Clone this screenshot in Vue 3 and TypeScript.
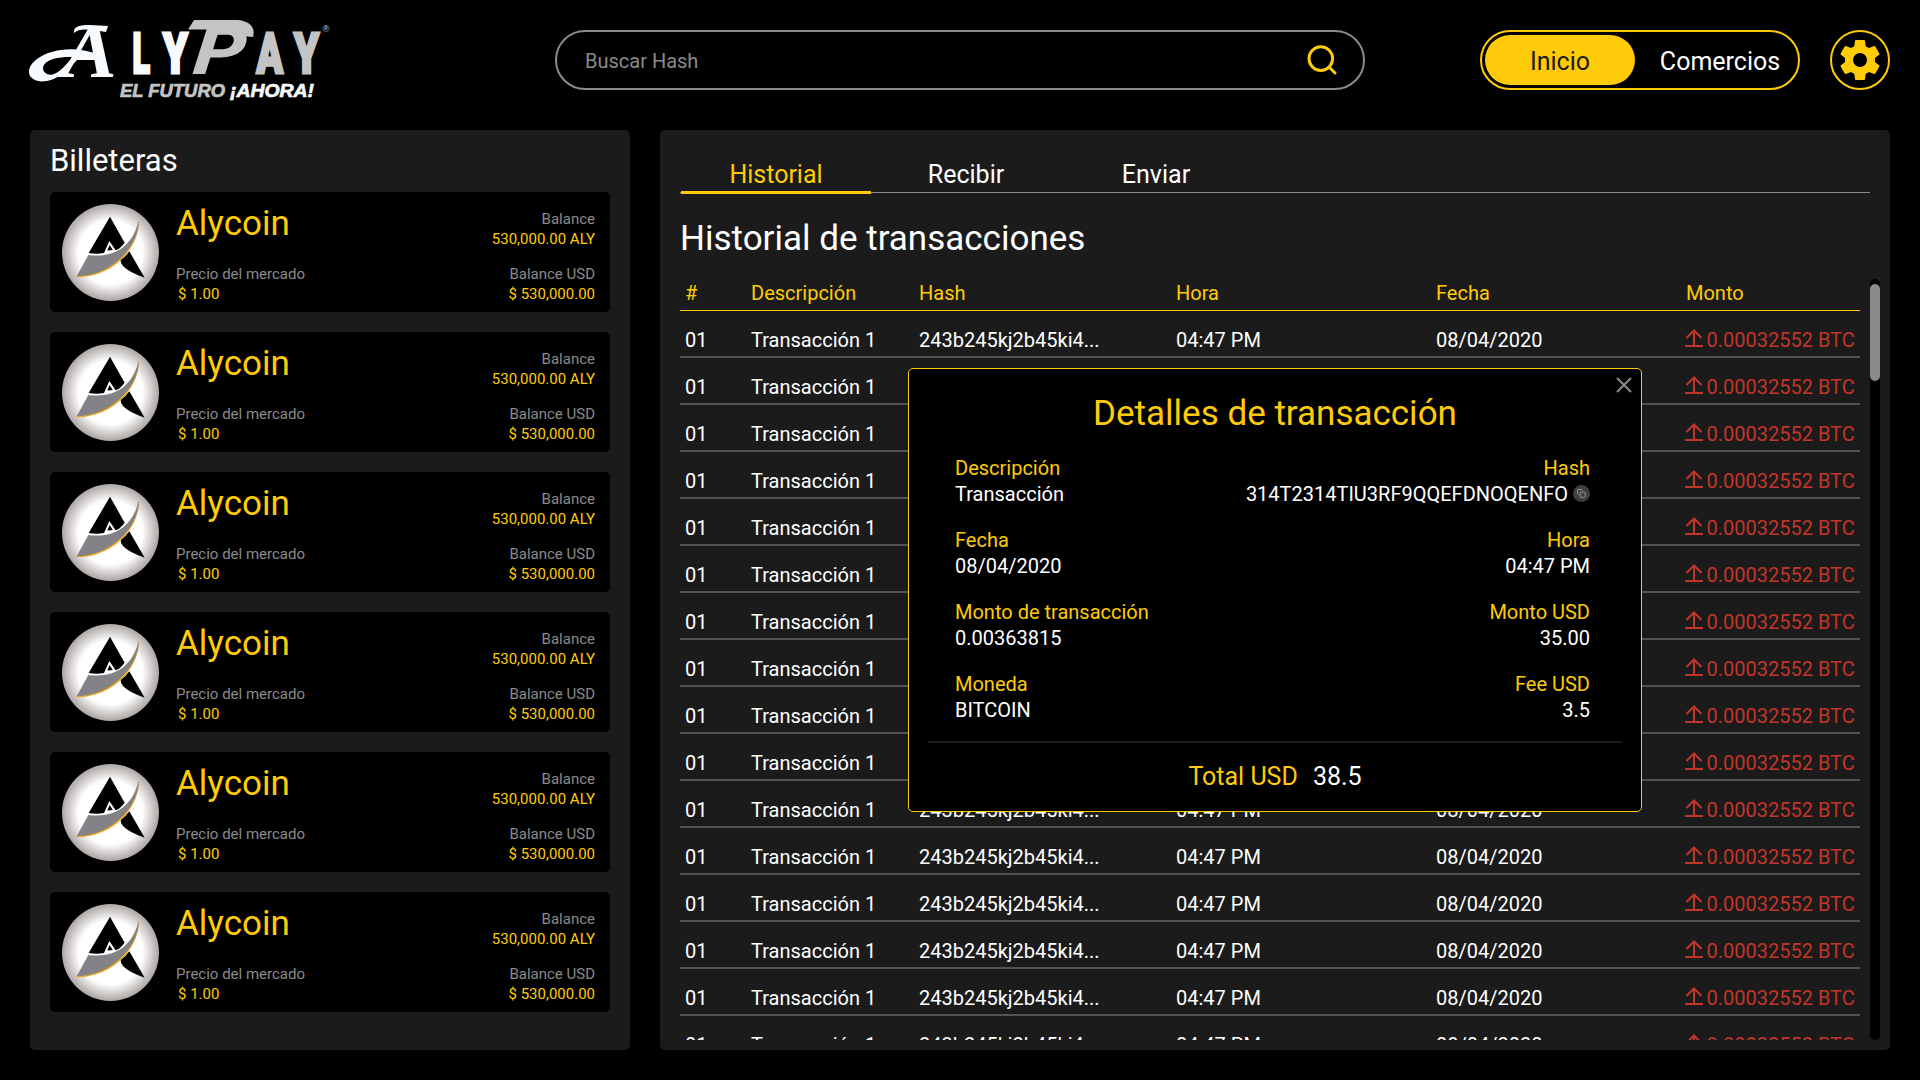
<script setup lang="ts">
interface Wallet {
  name: string
  price: string
  balance: string
  balanceUsd: string
}
interface Transaction {
  id: string
  description: string
  hash: string
  time: string
  date: string
  amount: string
}
interface Detail {
  label: string
  value: string
  copy?: boolean
}

const wallets: Wallet[] = Array.from({ length: 6 }, () => ({
  name: 'Alycoin',
  price: '$ 1.00',
  balance: '530,000.00 ALY',
  balanceUsd: '$ 530,000.00',
}))

const tabs: string[] = ['Historial', 'Recibir', 'Enviar']
const columns: string[] = ['#', 'Descripción', 'Hash', 'Hora', 'Fecha', 'Monto']

const transactions: Transaction[] = Array.from({ length: 16 }, () => ({
  id: '01',
  description: 'Transacción 1',
  hash: '243b245kj2b45ki4...',
  time: '04:47 PM',
  date: '08/04/2020',
  amount: '0.00032552 BTC',
}))

const details: [Detail, Detail][] = [
  [{ label: 'Descripción', value: 'Transacción' }, { label: 'Hash', value: '314T2314TIU3RF9QQEFDNOQENFO', copy: true }],
  [{ label: 'Fecha', value: '08/04/2020' }, { label: 'Hora', value: '04:47 PM' }],
  [{ label: 'Monto de transacción', value: '0.00363815' }, { label: 'Monto USD', value: '35.00' }],
  [{ label: 'Moneda', value: 'BITCOIN' }, { label: 'Fee USD', value: '3.5' }],
]
</script>

<template>
  <div class="page">
    <header class="header">
      <svg class="logo" width="320" height="100" viewBox="0 0 320 100">
        <g class="logo-white">
          <text class="script" transform="translate(42 66.500) scale(1.08 1)" font-size="76">A</text>
          <path d="M54 23C53 16 60 15 70 15L88 16L86 22C68 19 59 18 54 23Z" />
          <path d="M80 45C56 35 30 39 17 49C3 60 9 71 22 71.500C36 71.500 46 62 57 50L51 49C42 60 34 67 27 64C20 61 22 52 33 49C48 45 64 48 80 50Z" />
          <text class="block" transform="translate(112.500 63) scale(.58 1)" font-size="55.500">L</text>
          <text class="block" transform="translate(143 63) scale(.71 1)" font-size="55.500">Y</text>
        </g>
        <g class="logo-grey">
          <path d="M174 10H215C230 10 236 18 233 27L221 26C222 21 218 19.500 211 19.500H168Z" />
          <text class="slant" transform="translate(172 64) skewX(-6) scale(1.22 1)" font-size="67">P</text>
          <text class="block" transform="translate(236.500 63) scale(.7 1)" font-size="55.500">A</text>
          <text class="block" transform="translate(274 63) scale(.72 1)" font-size="55.500">Y</text>
          <text x="302.500" y="21.500" class="mark">®</text>
        </g>
        <text class="tagline grey" x="100" y="87" textLength="105" lengthAdjust="spacingAndGlyphs">EL FUTURO</text>
        <text class="tagline white" x="210" y="87" textLength="84" lengthAdjust="spacingAndGlyphs">¡AHORA!</text>
      </svg>

      <div class="search">
        <span>Buscar Hash</span>
        <svg width="32" height="32" viewBox="0 0 32 32">
          <circle cx="14.800" cy="14.600" r="11.800" />
          <path d="M23 23L29 29" />
        </svg>
      </div>

      <nav class="switch">
        <span class="option selected">Inicio</span>
        <span class="option">Comercios</span>
      </nav>

      <div class="settings">
        <svg width="48" height="48" viewBox="0 0 24 24">
          <path d="M12 15.500A3.500 3.500 0 0 1 8.500 12 3.500 3.500 0 0 1 12 8.500a3.500 3.500 0 0 1 3.500 3.500 3.500 3.500 0 0 1-3.500 3.500m7.430-2.530c.04-.32.07-.64.07-.97 0-.33-.03-.66-.07-1l2.110-1.630c.19-.15.24-.42.12-.64l-2-3.460c-.12-.22-.39-.31-.61-.22l-2.490 1c-.52-.39-1.060-.73-1.690-.98l-.37-2.650A.506.506 0 0 0 14 2h-4c-.25 0-.46.18-.5.42l-.37 2.650c-.63.25-1.170.59-1.690.98l-2.490-1c-.22-.09-.49 0-.61.22l-2 3.460c-.13.22-.07.49.12.64L4.570 11c-.04.34-.07.67-.07 1 0 .33.03.65.07.97l-2.110 1.660c-.19.15-.25.42-.12.64l2 3.460c.12.22.39.3.61.22l2.490-1.010c.52.4 1.060.74 1.690.99l.37 2.650c.04.24.25.42.5.42h4c.25 0 .46-.18.5-.42l.37-2.650c.63-.26 1.170-.59 1.690-.99l2.490 1.010c.22.08.49 0 .61-.22l2-3.460c.12-.22.07-.49-.12-.64l-2.110-1.660Z" />
        </svg>
      </div>
    </header>

    <main class="content">
      <section class="panel wallets">
        <h2>Billeteras</h2>
        <article v-for="(w, i) in wallets" :key="i" class="wallet">
          <svg class="coin" width="97" height="97" viewBox="36 42 291 291">
            <defs>
              <radialGradient :id="`coin-${i}`">
                <stop offset="0" stop-color="#fff" />
                <stop offset=".66" stop-color="#fff" />
                <stop offset="1" stop-color="#aca6a4" />
              </radialGradient>
            </defs>
            <circle cx="181.500" cy="187.500" r="145.500" :fill="`url(#coin-${i})`" />
            <path d="M180 80L116 189Q140 193 162 189L178 153L197 181Q212 175 224 158Z" />
            <path d="M179 165L172 181Q180 182 188 179Z" />
            <path d="M238 184L284 263Q235 246 219 228Q211 219 212 210Q228 198 238 184Z" />
            <path d="M267 91C270 165 197 263 78 262L82 256C190 250 258 160 267 91Z" fill="#f0a920" />
            <path d="M267 91C267 165 190 257 80 259L115 195C190 204 245 175 267 91Z" fill="#838387" />
          </svg>
          <div class="wallet-info">
            <h3>{{ w.name }}</h3>
            <span class="caption">Precio del mercado</span>
            <span class="amount price">{{ w.price }}</span>
          </div>
          <div class="wallet-balance">
            <span class="caption">Balance</span>
            <span class="amount">{{ w.balance }}</span>
            <span class="caption usd">Balance USD</span>
            <span class="amount">{{ w.balanceUsd }}</span>
          </div>
        </article>
      </section>

      <section class="panel history">
        <div class="tabs">
          <span v-for="(t, i) in tabs" :key="t" class="tab" :class="{ active: i === 0 }">{{ t }}</span>
        </div>
        <h1>Historial de transacciones</h1>
        <div class="table-area">
          <div class="table">
            <div class="row head">
              <span v-for="c in columns" :key="c">{{ c }}</span>
            </div>
            <div v-for="(t, i) in transactions" :key="i" class="row">
              <span>{{ t.id }}</span>
              <span>{{ t.description }}</span>
              <span>{{ t.hash }}</span>
              <span>{{ t.time }}</span>
              <span>{{ t.date }}</span>
              <span class="outgoing">
                <svg width="18" height="18" viewBox="0 0 18 18">
                  <path d="M9 16V1.500M1.500 9L9 1.500L16.500 9M0 17H18" />
                </svg>
                {{ t.amount }}
              </span>
            </div>
          </div>
          <div class="scrollbar"><div class="thumb"></div></div>
        </div>
      </section>
    </main>

    <div class="modal">
      <svg class="close" width="16" height="16" viewBox="0 0 16 16">
        <path d="M1 1L15 15M15 1L1 15" />
      </svg>
      <h2>Detalles de transacción</h2>
      <div class="details">
        <div v-for="(pair, i) in details" :key="i" class="pair">
          <div v-for="d in pair" :key="d.label" class="detail">
            <span class="label">{{ d.label }}</span>
            <span class="value">
              {{ d.value }}
              <svg v-if="d.copy" width="17" height="17" viewBox="0 0 17 17">
                <circle cx="8.500" cy="8.500" r="8.500" fill="#3c4043" stroke="none" />
                <g stroke="#a2a4a6" stroke-width=".9">
                  <rect x="7.200" y="7" width="5" height="5.400" rx="1" />
                  <path d="M5.600 9.300H5.300Q4.600 9.300 4.600 8.600V5.300Q4.600 4.500 5.400 4.500H8.600Q9.400 4.500 9.400 5.200" />
                </g>
              </svg>
            </span>
          </div>
        </div>
      </div>
      <div class="total">
        <span class="label">Total USD</span>
        <span>38.5</span>
      </div>
    </div>
  </div>
</template>

<style>
body {
  margin: 0;
  background: #000;
}
</style>

<style scoped>
.page {
  position: relative;
  box-sizing: border-box;
  width: 1920px;
  height: 1080px;
  padding: 0 30px 30px;
  overflow: hidden;
  display: flex;
  flex-direction: column;
  background: #000;
  color: #fff;
  font-family: Roboto, "Liberation Sans", sans-serif;
}
h1, h2, h3 {
  margin: 0;
  font-weight: 400;
}
.header {
  flex: none;
  height: 130px;
  display: flex;
  align-items: flex-start;
}
.logo {
  flex: none;
  margin: 10px 215px 0 -10px;
}
.logo-white {
  fill: #f8fbfd;
  stroke: #f8fbfd;
  stroke-width: 0;
}
.logo-grey {
  fill: #c4c4c4;
  stroke: #c4c4c4;
  stroke-width: 0;
}
.script {
  font-family: "Liberation Serif", serif;
  font-weight: 700;
  font-style: italic;
}
.block {
  font-family: Roboto, sans-serif;
  font-weight: 900;
  stroke-width: 3;
}
.slant {
  font-family: Roboto, sans-serif;
  font-weight: 800;
  font-style: italic;
}
.mark {
  font-family: "Liberation Sans", sans-serif;
  font-size: 9.500px;
}
.tagline {
  font-family: "Liberation Sans", sans-serif;
  font-size: 18.500px;
  font-weight: 700;
  font-style: italic;
  stroke-width: .7;
}
.grey {
  fill: #c4c4c4;
  stroke: #c4c4c4;
}
.white {
  fill: #f8fbfd;
  stroke: #f8fbfd;
}
.search {
  box-sizing: border-box;
  width: 810px;
  height: 60px;
  margin-top: 30px;
  padding: 0 25px 0 28px;
  border: 2px solid #8a8a8a;
  border-radius: 30px;
  display: flex;
  align-items: center;
  justify-content: space-between;
  color: #8a8a8a;
  font-size: 20px;
}
.search span { padding-top: 2px; }
.search svg {
  fill: none;
  stroke: #ffcb08;
  stroke-width: 3;
  stroke-linecap: round;
}
.switch {
  box-sizing: border-box;
  width: 320px;
  height: 60px;
  margin: 30px 30px 0 115px;
  padding: 3px;
  border: 2px solid #ffcb08;
  border-radius: 30px;
  display: flex;
  font-size: 25px;
}
.option {
  box-sizing: border-box;
  flex: 1;
  display: flex;
  align-items: center;
  justify-content: center;
  padding: 2px 0 0 10px;
}
.selected {
  flex: none;
  width: 150px;
  padding: 2px 0 0;
  border-radius: 25px;
  background: #ffcb08;
  color: #1b1b1b;
}
.settings {
  box-sizing: border-box;
  width: 60px;
  height: 60px;
  margin-top: 30px;
  border: 2px solid #ffcb08;
  border-radius: 50%;
  display: flex;
  align-items: center;
  justify-content: center;
  fill: #ffcb08;
}
.settings svg { flex: none; }
.content {
  flex: 1;
  min-height: 0;
  display: flex;
  gap: 30px;
}
.panel {
  box-sizing: border-box;
  border-radius: 5px;
  background: #1b1b1b;
}
.wallets {
  width: 600px;
  padding: 0 20px;
}
.wallets h2 {
  height: 62px;
  line-height: 62px;
  font-size: 31px;
}
.wallet {
  box-sizing: border-box;
  height: 120px;
  margin-bottom: 20px;
  padding: 0 15px 0 12px;
  border-radius: 5px;
  background: #000;
  display: flex;
}
.coin {
  margin: 12px 17px 0 0;
}
.wallet-info,
.wallet-balance {
  display: flex;
  flex-direction: column;
}
.wallet-balance {
  margin-left: auto;
  padding-top: 17px;
  align-items: flex-end;
}
.wallet h3 {
  height: 72px;
  line-height: 64px;
  color: #ffcb08;
  font-size: 35px;
}
.caption,
.amount {
  font-size: 15px;
  line-height: 20px;
}
.caption { color: #8a8a8a; }
.amount { color: #ffcb08; }
.price { padding-left: 2px; }
.usd { margin-top: 15px; }
.history {
  flex: 1;
  padding: 0 10px 10px 20px;
  display: flex;
  flex-direction: column;
}
.tabs {
  height: 63px;
  margin-right: 10px;
  display: flex;
  align-items: flex-end;
  box-shadow: inset 0 -1px #8a8a8a;
}
.tab {
  box-sizing: border-box;
  width: 190px;
  height: 64px;
  margin: 0 0 -1px 0;
  padding-top: 25px;
  line-height: 40px;
  text-align: center;
  text-indent: 2px;
  font-size: 25px;
}
.tab.active {
  margin: 0 -1px -1px 1px;
  border-bottom: 3px solid #ffcb08;
  color: #ffcb08;
  text-indent: 0;
}
.history h1 {
  height: 86px;
  line-height: 91px;
  font-size: 35px;
}
.table-area {
  flex: 1;
  min-height: 0;
  display: flex;
  gap: 10px;
}
.table {
  width: 1180px;
  overflow: hidden;
}
.row {
  box-sizing: border-box;
  height: 47px;
  padding-top: 8px;
  padding-left: 5px;
  border-bottom: 2px solid #535353;
  display: grid;
  grid-template-columns: 66px 168px 257px 260px 249px 1fr;
  font-size: 20px;
  line-height: 42px;
  white-space: nowrap;
}
.row.head {
  height: 32px;
  padding-top: 0;
  border-bottom: 1px solid #ffcb08;
  color: #ffcb08;
  line-height: 28px;
}
.row.head span:last-child { padding-left: 1px; }
.outgoing {
  display: flex;
  gap: 3.500px;
  color: #c33528;
}
.outgoing svg {
  margin-top: 10px;
  fill: none;
  stroke: #c33528;
  stroke-width: 2;
}
.scrollbar {
  width: 10px;
  box-sizing: border-box;
  padding-top: 5px;
  border-radius: 5px;
  background: #000;
}
.thumb {
  height: 97px;
  border-radius: 5px;
  background: #8a8a8a;
}
.modal {
  position: absolute;
  left: 908px;
  top: 368px;
  box-sizing: border-box;
  width: 734px;
  height: 444px;
  padding: 0 19px;
  border: 1px solid #ffcb08;
  border-radius: 5px;
  background: #000;
}
.close {
  position: absolute;
  right: 9px;
  top: 8px;
  stroke: #8a8a8a;
  stroke-width: 2;
}
.modal h2 {
  height: 86px;
  line-height: 89px;
  text-align: center;
  color: #ffcb08;
  font-size: 35px;
}
.details {
  height: 286px;
  padding: 0 32px 0 27px;
  border-bottom: 2px solid #1b1b1b;
}
.pair {
  height: 72px;
  display: flex;
  justify-content: space-between;
  font-size: 20px;
  line-height: 26px;
}
.detail {
  display: flex;
  flex-direction: column;
}
.detail:last-child { align-items: flex-end; }
.label { color: #ffcb08; }
.value {
  display: flex;
  align-items: center;
  gap: 5px;
}
.value svg {
  margin-bottom: 1px;
  fill: none;
}
.total {
  height: 67px;
  display: flex;
  align-items: center;
  justify-content: center;
  gap: 15px;
  font-size: 25px;
}
</style>
